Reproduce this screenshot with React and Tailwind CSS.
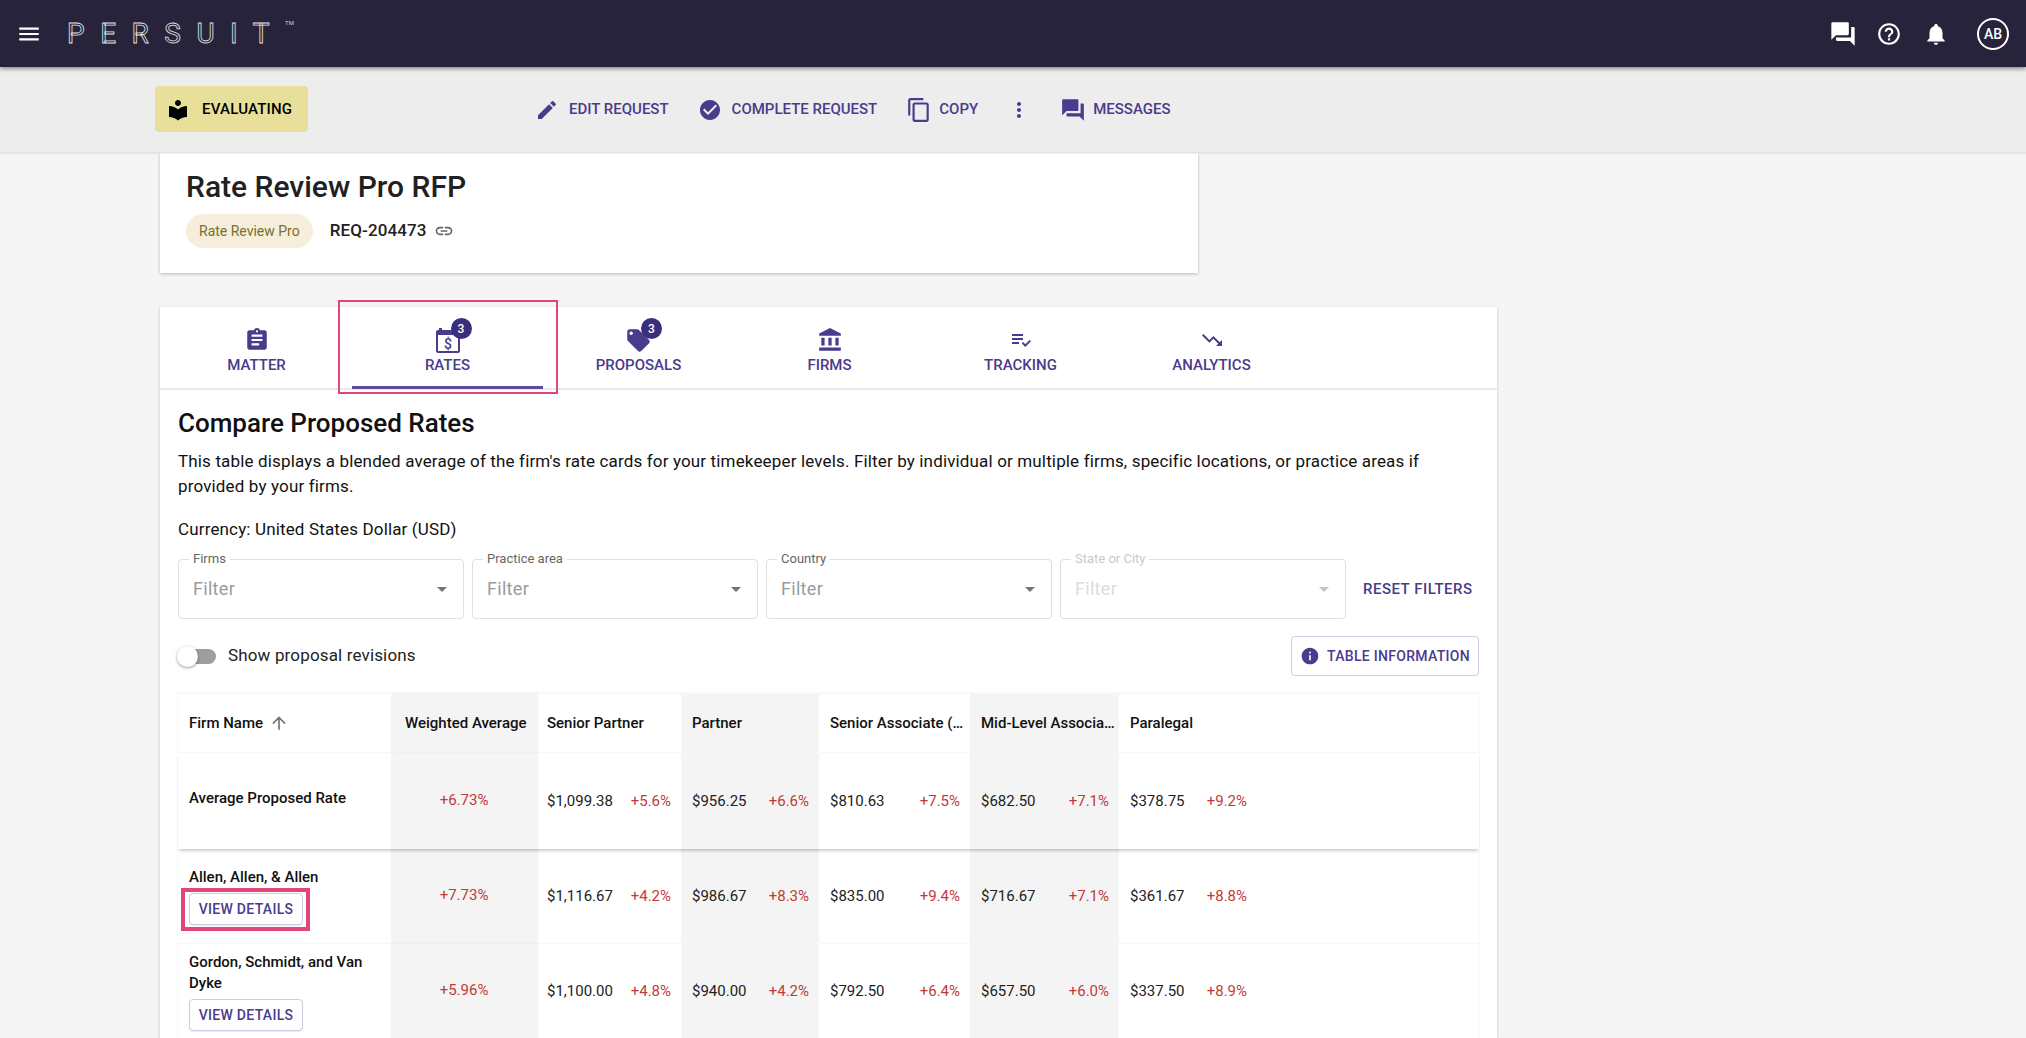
import {
  MdMenu, MdEdit, MdCheckCircle, MdContentCopy, MdMoreVert, MdForum, MdHelpOutline, MdNotifications,
  MdAssignment, MdLocalOffer, MdAccountBalance, MdPlaylistAddCheck, MdTrendingDown, MdInfo,
  MdArrowDropDown, MdArrowUpward, MdLink, MdLocalLibrary,
} from 'react-icons/md';

const rows = [
  {
    name: 'Average Proposed Rate', avg: '+6.73%',
    cells: [['$1,099.38', '+5.6%'], ['$956.25', '+6.6%'], ['$810.63', '+7.5%'], ['$682.50', '+7.1%'], ['$378.75', '+9.2%']],
  },
  {
    name: 'Allen, Allen, & Allen', avg: '+7.73%', marked: true,
    cells: [['$1,116.67', '+4.2%'], ['$986.67', '+8.3%'], ['$835.00', '+9.4%'], ['$716.67', '+7.1%'], ['$361.67', '+8.8%']],
  },
  {
    name: 'Gordon, Schmidt, and Van Dyke', avg: '+5.96%',
    cells: [['$1,100.00', '+4.8%'], ['$940.00', '+4.2%'], ['$792.50', '+6.4%'], ['$657.50', '+6.0%'], ['$337.50', '+8.9%']],
  },
];

const gridCols = 'grid grid-cols-[213px_146px_144px_138px_151px_149px_138px_1fr]';

function RatesIcon() {
  return (
    <svg width="26" height="26" viewBox="0 0 26 26" className="text-[#4a3b8c]">
      <path d="M4 1h3v2h11V1h3v2h2a2 2 0 0 1 2 2v19a2 2 0 0 1-2 2H3a2 2 0 0 1-2-2V5a2 2 0 0 1 2-2h1z" fill="currentColor" />
      <rect x="3" y="8" width="20" height="16" fill="#fff" />
      <text x="13" y="21.5" textAnchor="middle" fontSize="14" fontWeight="500" fontFamily="Roboto" fill="currentColor">$</text>
    </svg>
  );
}

function Action({ icon, label }) {
  return (
    <div className="flex items-center gap-[10px] text-[15px] font-medium text-[#4a3b8c]">
      {icon}
      <span>{label}</span>
    </div>
  );
}

function Tab({ icon, label, badge, active }) {
  return (
    <div className="relative flex h-[81px] w-[191px] flex-col items-center pt-[21px]">
      <div className="relative flex h-[24px] items-center justify-center">
        {icon}
        {badge && (
          <span className="absolute left-[16px] top-[-10px] flex h-[21px] w-[21px] items-center justify-center rounded-full bg-[#3b2f7d] text-xs font-medium text-white">
            {badge}
          </span>
        )}
      </div>
      <div className="mt-[5px] text-[15px] leading-4 font-medium text-[#4a3b8c]">{label}</div>
      {active && (
        <>
          <div className="absolute -bottom-[1px] left-0 h-[3px] w-full bg-[#5a4b9c]" />
          <div className="absolute -top-[7px] -right-[15px] -bottom-[6px] -left-[14px] border-2 border-[#e0457f]" />
        </>
      )}
    </div>
  );
}

function Field({ label, disabled }) {
  return (
    <div className="relative flex h-[60px] w-[286px] items-center justify-between rounded border border-[#dfdfe4] pr-[9px] pb-[1px] pl-[14px]">
      <span className={`absolute -top-[9px] left-[10px] bg-white px-[4px] text-[13px] leading-4 ${disabled ? 'text-[#c9c9c9]' : 'text-[#666]'}`}>
        {label}
      </span>
      <span className={`text-[18px] tracking-[0.3px] ${disabled ? 'text-[#dcdcdc]' : 'text-[#9b9b9b]'}`}>Filter</span>
      <MdArrowDropDown size={24} className={disabled ? 'text-[#c4c4c4]' : 'text-[#757575]'} />
    </div>
  );
}

function ViewDetails({ marked }) {
  const button = (
    <div className="flex h-[32px] w-[114px] items-center justify-center rounded border border-[#cfcbe3] bg-white text-sm font-medium tracking-[0.3px] text-[#4a3b8c] shadow-[0_1px_1px_rgba(0,0,0,0.08)]">
      VIEW DETAILS
    </div>
  );
  if (!marked) return <div className="mt-[5px]">{button}</div>;
  return (
    <div className="relative mt-[5px]">
      {button}
      <div className="absolute -top-[5px] -bottom-[6px] -left-[8px] w-[129px] border-[4px] border-[#e0457f]" />
    </div>
  );
}

function Row({ row, index }) {
  const first = index === 0;
  const rowClass = first
    ? 'relative z-10 h-[96px] bg-white shadow-[0_3px_3px_-1px_rgba(0,0,0,0.2)]'
    : 'h-[95px] border-b border-[#f7f7f7]';
  const firmPad = first ? 'flex items-center pb-[6px]' : index === 1 ? 'pt-[18px]' : 'pt-[8px]';
  return (
    <div className={`${gridCols} ${rowClass}`}>
      <div className={`pr-[11px] pl-[11px] text-[15px] leading-[21px] font-medium text-[#111] ${firmPad}`}>
        <div>{row.name}</div>
        {!first && <ViewDetails marked={row.marked} />}
      </div>
      <div className="flex items-center justify-center bg-[#f4f4f4] pb-[1px] text-[15px] text-[#bf3b3b] shadow-[1px_0_2px_rgba(0,0,0,0.06)]">
        {row.avg}
      </div>
      {row.cells.map(([rate, change], i) => (
        <div key={i} className={`flex items-center justify-between pr-[10px] text-[15px] ${i === 0 ? 'pl-[10px]' : 'pl-[11px]'} ${i % 2 === 1 ? 'bg-[#f4f4f4]' : ''}`}>
          <span className="text-[#222]">{rate}</span>
          <span className="text-[#bf3b3b]">{change}</span>
        </div>
      ))}
      <div />
    </div>
  );
}

export default function App() {
  const heads = ['Senior Partner', 'Partner', 'Senior Associate (…', 'Mid-Level Associa…', 'Paralegal'];
  return (
    <div className="h-screen overflow-hidden bg-[#f5f5f5] font-['Roboto',sans-serif] antialiased opacity-[0.999]">
      {/* top bar */}
      <header className="relative z-20 flex h-[67px] items-center justify-between bg-[#26233a] pr-[17px] pl-[16px] shadow-[0_2px_4px_rgba(0,0,0,0.4)]">
        <div className="flex items-center">
          <MdMenu size={26} className="text-white" />
          <div className="ml-[25px] flex items-start">
            <span className="text-[28px] leading-none tracking-[15.5px] text-transparent [-webkit-text-stroke:0.8px_#e4e4e4]">PERSUIT</span>
            <span className="text-[6px] leading-none text-[#cfcfcf]">TM</span>
          </div>
        </div>
        <div className="flex items-center text-white">
          <MdForum size={28} />
          <MdHelpOutline size={26} className="ml-[19px]" />
          <MdNotifications size={26} className="ml-[21px]" />
          <div className="ml-[28px] flex h-[32px] w-[32px] items-center justify-center rounded-full border-2 border-white text-sm font-medium">AB</div>
        </div>
      </header>

      {/* request actions */}
      <div className="relative z-10 flex h-[86px] items-center border-b border-[#e4e4e4] bg-[#ededed] pb-[2px] pl-[155px] shadow-[0_1px_1px_rgba(0,0,0,0.05)]">
        <div className="flex h-[46px] w-[153px] items-center gap-[12px] rounded bg-[#e8e09a] pt-[2px] pl-[11px] text-[15px] font-medium tracking-[0.2px] text-black">
          <MdLocalLibrary size={24} />
          EVALUATING
        </div>
        <div className="mt-[2px] ml-[227px] flex items-center gap-[29px]">
          <Action icon={<MdEdit size={24} />} label="EDIT REQUEST" />
          <Action icon={<MdCheckCircle size={24} />} label="COMPLETE REQUEST" />
          <Action icon={<MdContentCopy size={26} className="-mr-[3px]" />} label="COPY" />
          <MdMoreVert size={24} className="text-[#4a3b8c]" />
          <Action icon={<MdForum size={26} className="-mr-[3px]" />} label="MESSAGES" />
        </div>
      </div>

      <main className="pl-[160px]">
        <section className="h-[120px] w-[1038px] bg-white pt-[16px] pl-[26px] shadow-[0_1px_3px_rgba(0,0,0,0.25)]">
          <h1 className="text-[30px] leading-[36px] font-medium text-[#212121]">Rate Review Pro RFP</h1>
          <div className="mt-[9px] flex items-center">
            <span className="flex h-[34px] items-center rounded-full bg-[#f6eedb] px-[13px] text-sm text-[#7a6f2c]">Rate Review Pro</span>
            <span className="ml-[17px] text-[17px] font-medium tracking-[0.1px] text-[#212121]">REQ-204473</span>
            <MdLink size={20} className="ml-[7px] text-[#666]" />
          </div>
        </section>

        <section className="mt-[34px] w-[1337px] bg-white shadow-[0_1px_3px_rgba(0,0,0,0.2)]">
          <nav className="flex border-b-2 border-[#e8e8e8] pl-[1px]">
            <Tab label="MATTER" icon={<MdAssignment size={26} className="text-[#4a3b8c]" />} />
            <Tab label="RATES" active badge="3" icon={<RatesIcon />} />
            <Tab label="PROPOSALS" badge="3" icon={<MdLocalOffer size={27} className="text-[#4a3b8c]" />} />
            <Tab label="FIRMS" icon={<MdAccountBalance size={26} className="text-[#4a3b8c]" />} />
            <Tab label="TRACKING" icon={<MdPlaylistAddCheck size={24} className="text-[#4a3b8c]" />} />
            <Tab label="ANALYTICS" icon={<MdTrendingDown size={24} className="text-[#4a3b8c]" />} />
          </nav>

          <div className="px-[18px] pt-[17px]">
            <h2 className="text-[26px] leading-8 font-medium text-[#111]">Compare Proposed Rates</h2>
            <p className="mt-[10px] text-[17px] leading-[25px] tracking-[0.15px] text-[#111]">
              This table displays a blended average of the firm's rate cards for your timekeeper levels. Filter by individual or multiple firms, specific locations, or practice areas if provided by your firms.
            </p>
            <p className="mt-[18px] text-[17px] leading-6 tracking-[0.15px] text-[#111]">Currency: United States Dollar (USD)</p>

            <div className="mt-[18px] flex items-center gap-2">
              <Field label="Firms" />
              <Field label="Practice area" />
              <Field label="Country" />
              <Field label="State or City" disabled />
              <span className="ml-[9px] text-[15px] font-medium tracking-[0.5px] text-[#4a3b8c]">RESET FILTERS</span>
            </div>

            <div className="mt-[17px] flex items-center justify-between">
              <div className="flex items-center">
                <div className="relative h-[15px] w-[38px] rounded-full bg-[#9e9e9e]">
                  <div className="absolute top-[-3px] left-[-1px] h-[21px] w-[21px] rounded-full bg-white shadow-[0_1px_3px_rgba(0,0,0,0.4)]" />
                </div>
                <span className="ml-[12px] text-[17px] tracking-[0.15px] text-[#222]">Show proposal revisions</span>
              </div>
              <div className="flex h-[40px] w-[188px] items-center gap-[7px] rounded border border-[#cfcbe3] pl-[8px] text-sm font-medium tracking-[0.3px] text-[#4a3b8c]">
                <MdInfo size={20} />
                TABLE INFORMATION
              </div>
            </div>

            <div className="mt-[17px] border-t border-[#f7f7f7] shadow-[0_0_0_1px_#f9f9f9]">
              <div className={`${gridCols} h-[59px] items-stretch border-b border-[#f7f7f7] text-[15px] font-medium text-[#111]`}>
                <div className="flex items-center px-[11px]">
                  Firm Name
                  <MdArrowUpward size={20} className="ml-[6px] text-[#757575]" />
                </div>
                <div className="flex items-center bg-[#f4f4f4] pl-[14px] whitespace-nowrap shadow-[1px_0_2px_rgba(0,0,0,0.06)]">Weighted Average</div>
                {heads.map((head, i) => (
                  <div key={head} className={`flex items-center whitespace-nowrap ${i === 0 ? 'pl-[10px]' : 'pl-[11px]'} ${i % 2 === 1 ? 'bg-[#f4f4f4]' : ''}`}>
                    {head}
                  </div>
                ))}
                <div />
              </div>
              {rows.map((row, i) => (
                <Row key={row.name} row={row} index={i} />
              ))}
            </div>
          </div>
        </section>
      </main>
    </div>
  );
}
